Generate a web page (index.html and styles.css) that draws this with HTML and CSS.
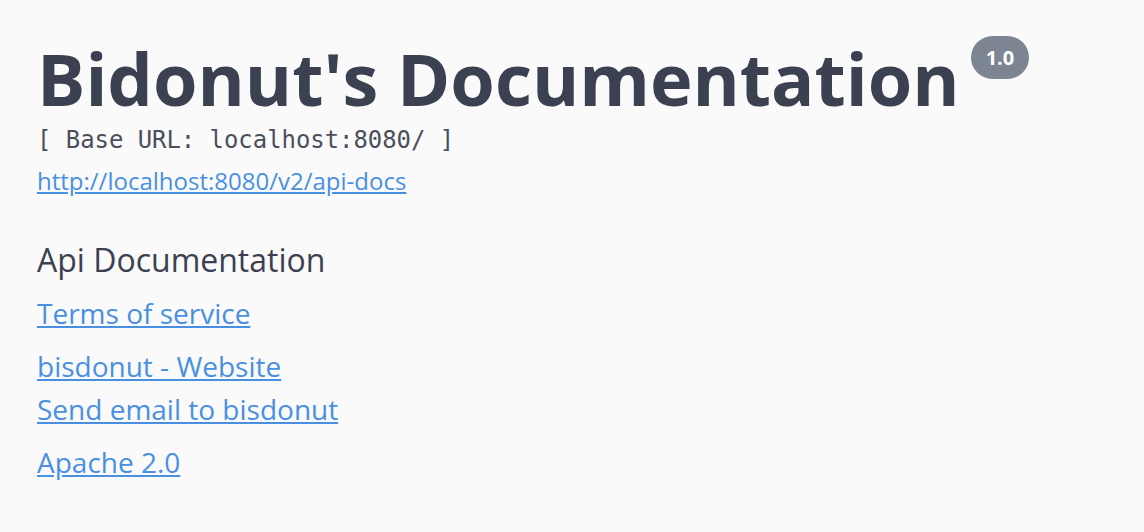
FILE: index.html
```html
<!DOCTYPE html>
<html>
<head>
<meta charset="utf-8">
<link rel="stylesheet" href="styles.css">
</head>
<body>
<div class="info">
  <hgroup class="main">
    <h2 class="title">Bidonut's Documentation<small class="badge">1.0</small></h2>
    <pre class="base-url">[ Base URL: localhost:8080/ ]</pre>
    <a class="url" href="#">http://localhost:8080/v2/api-docs</a>
  </hgroup>
  <div class="description">Api Documentation</div>
  <div class="links">
    <div class="row"><a href="#">Terms of service</a></div>
    <div class="row contact">
      <a href="#">bisdonut - Website</a>
      <a href="#">Send email to bisdonut</a>
    </div>
    <div class="row"><a href="#">Apache 2.0</a></div>
  </div>
</div>
</body>
</html>
```
FILE: styles.css
```css
html, body {
  margin: 0;
  background: #fafafa;
}
body {
  font-family: "Open Sans", sans-serif;
  color: #3b4151;
}
.info {
  padding: 30px 37px;
}
.main {
  margin: 0;
}
.title {
  margin: 0;
  font-size: 72px;
  font-weight: 700;
  line-height: 96px;
  color: #3b4151;
  white-space: nowrap;
}
.badge {
  display: inline-block;
  vertical-align: top;
  margin-top: 6px;
  margin-left: 11px;
  padding: 4px 15px;
  border-radius: 30px;
  background: #7d8492;
  color: #fff;
  font-size: 20px;
  line-height: 35px;
  font-weight: 700;
}
.base-url {
  margin: 0;
  font-family: "DejaVu Sans Mono", monospace;
  font-size: 23.9px;
  line-height: 28px;
  font-weight: 400;
  color: #4a4f5c;
}
.url {
  display: inline-block;
  margin-top: 12px;
  font-size: 24px;
  line-height: 30px;
  color: #4990e2;
}
.description {
  margin-top: 44px;
  font-size: 32px;
  line-height: 40px;
}
.links {
  padding-top: 2px;
}
.links a {
  display: block;
  color: #4990e2;
  font-size: 28px;
  line-height: 43px;
}
.row {
  margin-top: 10px;
}
```
